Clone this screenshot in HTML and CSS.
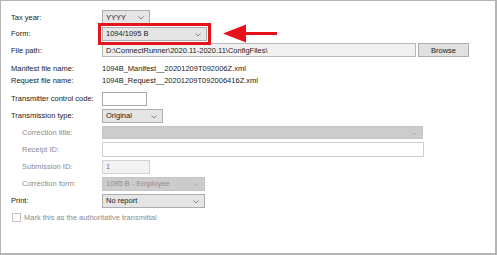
FILE: index.html
```html
<!DOCTYPE html>
<html lang="en">
<head>
  <meta charset="UTF-8" />
  <title>Transmittal settings</title>
  <link rel="stylesheet" href="styles.css">
</head>
<body>

  <div class="frame">

    <div class="top">
      <div class="row">
        <span class="label">Tax year:</span>
        <div class="combo w-year">YYYY <svg class="chev" viewBox="0 0 7 4"><path d="M0.5 0.5 L3.5 3.5 L6.5 0.5"/></svg></div>
      </div>
      <div class="row">
        <span class="label">Form:</span>
        <div class="combo w-form marked">1094/1095 B <svg class="chev" viewBox="0 0 7 4"><path d="M0.5 0.5 L3.5 3.5 L6.5 0.5"/></svg></div>
      </div>
      <div class="row">
        <span class="label">File path:</span>
        <div class="field readonly w-path">D:\ConnectRunner\2020.11-2020.11\ConfigFiles\</div>
        <div class="button">Browse</div>
      </div>
    </div>

    <div class="files">
      <div class="row small">
        <span class="label">Manifest file name:</span>
        <span class="value">1094B_Manifest__20201209T092006Z.xml</span>
      </div>
      <div class="row small">
        <span class="label">Request file name:</span>
        <span class="value">1094B_Request__20201209T092006416Z.xml</span>
      </div>
    </div>

    <div class="rest">
      <div class="row">
        <span class="label">Transmitter control code:</span>
        <div class="field w-code"></div>
      </div>
      <div class="row">
        <span class="label">Transmission type:</span>
        <div class="combo w-type">Original <svg class="chev" viewBox="0 0 7 4"><path d="M0.5 0.5 L3.5 3.5 L6.5 0.5"/></svg></div>
      </div>
      <div class="row">
        <span class="label sub">Correction title:</span>
        <div class="combo off w-wide"><svg class="chev" viewBox="0 0 7 4"><path d="M0.5 0.5 L3.5 3.5 L6.5 0.5"/></svg></div>
      </div>
      <div class="row">
        <span class="label sub">Receipt ID:</span>
        <div class="field faint w-receipt"></div>
      </div>
      <div class="row">
        <span class="label sub">Submission ID:</span>
        <div class="field dotted w-sub">1</div>
      </div>
      <div class="row">
        <span class="label sub">Correction form:</span>
        <div class="combo off w-print">1095 B - Employee <svg class="chev" viewBox="0 0 7 4"><path d="M0.5 0.5 L3.5 3.5 L6.5 0.5"/></svg></div>
      </div>
      <div class="row">
        <span class="label">Print:</span>
        <div class="combo w-print">No report <svg class="chev" viewBox="0 0 7 4"><path d="M0.5 0.5 L3.5 3.5 L6.5 0.5"/></svg></div>
      </div>
      <div class="row check">
        <span class="box"></span>
        <span class="muted">Mark this as the authoritative transmittal</span>
      </div>
    </div>

    <svg class="arrow" viewBox="0 0 55 21">
      <polygon points="1,10.5 24,1.5 24,19.5"/>
      <rect x="23" y="9" width="32" height="3"/>
    </svg>

  </div>

</body>
</html>
```

FILE: styles.css
```css
body {
  margin: 0;
  font-family: "Liberation Sans", Arial, sans-serif;
  font-size: 7.5px;
  color: #1a1a1a;
}

.frame {
  position: relative;
  box-sizing: border-box;
  width: 497px;
  height: 255px;
  padding: 8px 0 0 10px;
  border: 1px solid #b4b4b4;
  border-width: 1px 2px 2px 1px;
  background: #fff;
}

.row {
  display: flex;
  align-items: center;
  height: 17px;
}

.top .row {
  height: 16.5px;
}

.files {
  margin-top: 3.5px;
}

.row.small {
  height: 12px;
}

.rest {
  margin-top: 4px;
}

.label {
  width: 91px;
  flex: none;
  white-space: nowrap;
}

.label.sub {
  box-sizing: border-box;
  padding-left: 11px;
  color: #8c8c8c;
}

.value {
  white-space: nowrap;
}

.combo,
.field,
.button {
  box-sizing: border-box;
  height: 14px;
  display: flex;
  align-items: center;
  padding: 0 3px;
  border: 1px solid #adadad;
  white-space: nowrap;
}

.combo {
  background: #e5e5e5;
  position: relative;
}

.chev {
  position: absolute;
  right: 5px;
  top: 5px;
  width: 6px;
  height: 3.5px;
  fill: none;
  stroke: #6a6a6a;
  stroke-width: 0.9;
}

.combo.off {
  background: #cccccc;
  border-color: #c4c4c4;
  color: #8e8e8e;
}

.combo.off .chev {
  stroke: #a8a8a8;
}

.marked {
  outline: 3px solid #e3141c;
  outline-offset: 1px;
}

.field {
  background: #fff;
  border-color: #a9a9a9;
}

.field.readonly {
  background: #f1f1f1;
  border-color: #b8b8b8;
}

.field.faint {
  height: 15px;
  border-color: #cfcfcf;
}

.field.dotted {
  background: #f2f2f2;
  border-color: #d2d2d2;
  color: #7a7a7a;
}

.button {
  margin-left: 2px;
  width: 51px;
  justify-content: center;
  background: #e1e1e1;
}

.w-year { width: 48px; }
.w-form { width: 105px; }
.w-path { width: 314px; }
.w-code { width: 45px; }
.w-type { width: 61px; }
.w-wide { width: 321px; height: 13px; }
.w-receipt { width: 322px; }
.w-sub { width: 48px; }
.w-print { width: 103px; }

.check {
  padding-left: 1px;
}

.box {
  box-sizing: border-box;
  width: 9px;
  height: 9px;
  margin-right: 3px;
  border: 1px solid #c2c2c2;
  background: #fff;
}

.muted {
  color: #8c8c8c;
}

.arrow {
  position: absolute;
  left: 221px;
  top: 22px;
  width: 55px;
  height: 21px;
  fill: #e8101a;
}
```
